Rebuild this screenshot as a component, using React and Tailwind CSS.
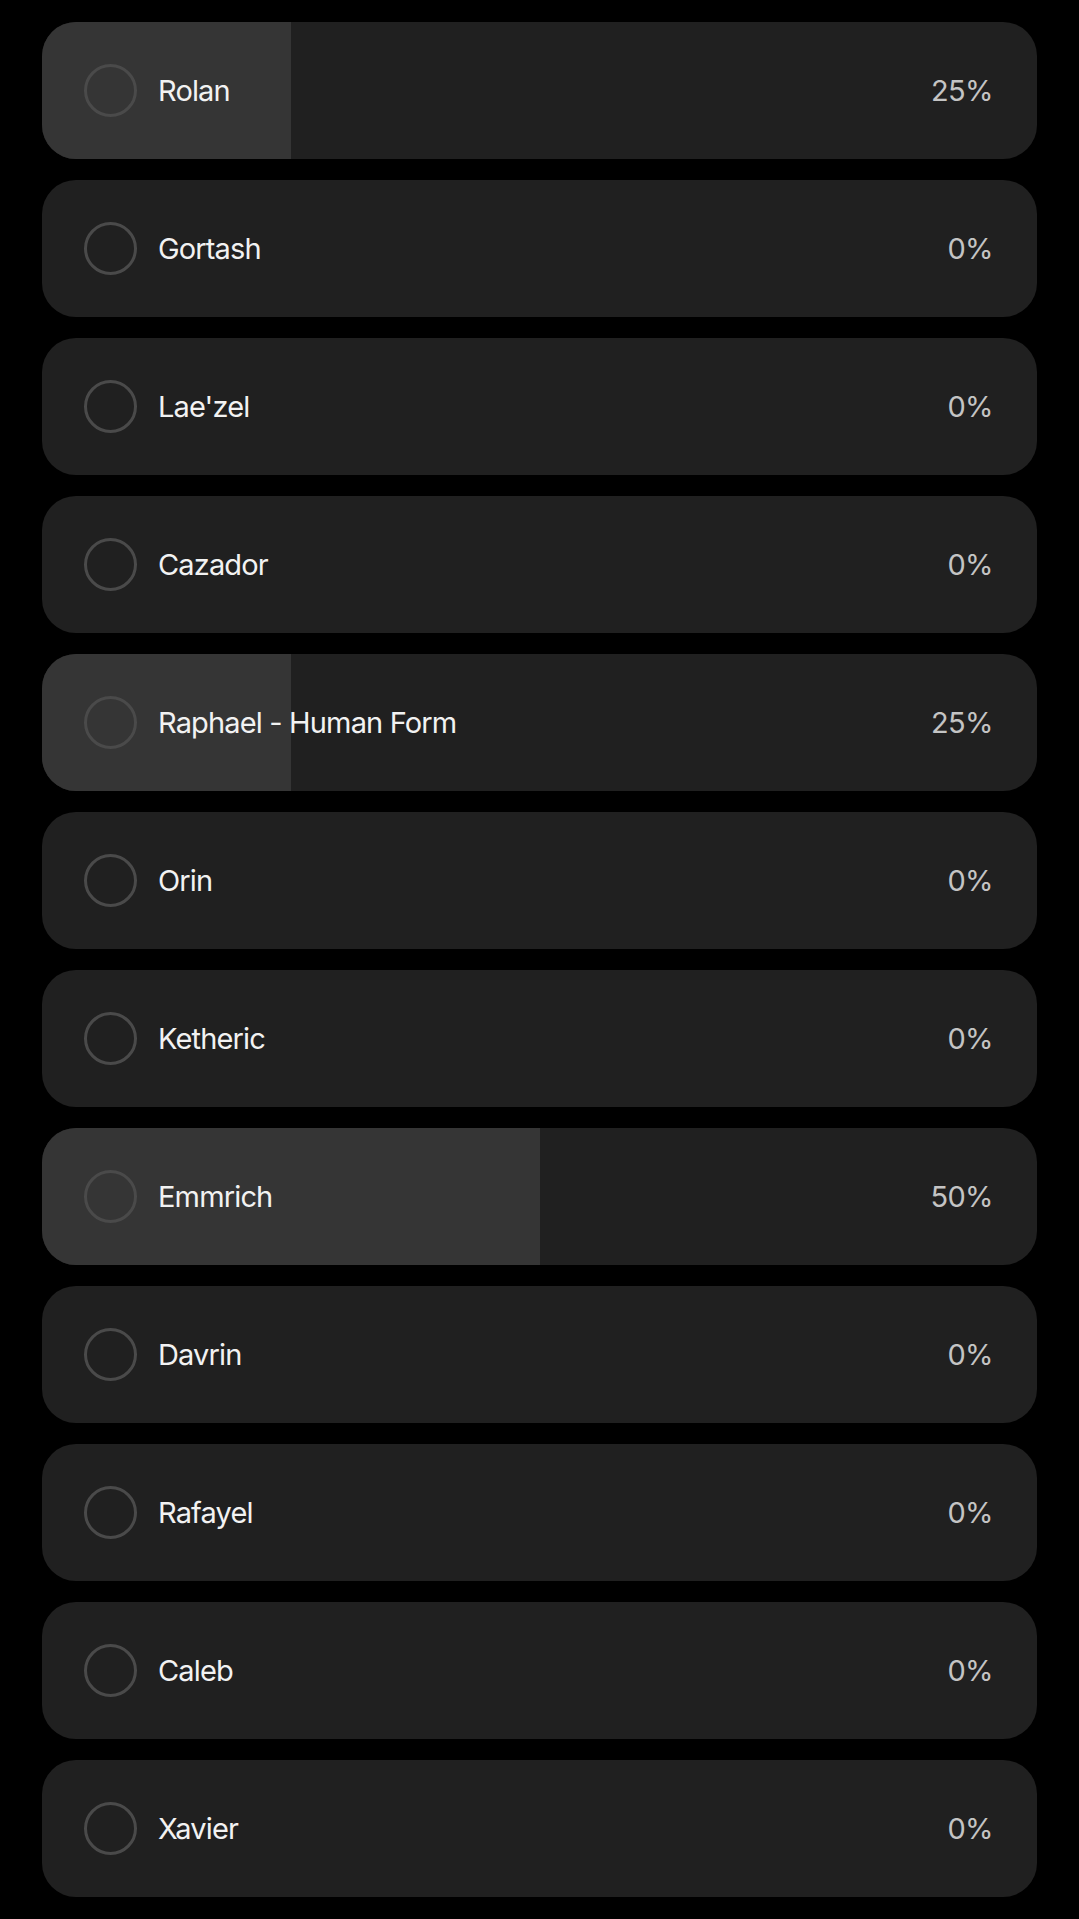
import React from 'react'

const options = [
  { name: 'Rolan', pct: 25 },
  { name: 'Gortash', pct: 0 },
  { name: "Lae'zel", pct: 0 },
  { name: 'Cazador', pct: 0 },
  { name: 'Raphael - Human Form', pct: 25 },
  { name: 'Orin', pct: 0 },
  { name: 'Ketheric', pct: 0 },
  { name: 'Emmrich', pct: 50 },
  { name: 'Davrin', pct: 0 },
  { name: 'Rafayel', pct: 0 },
  { name: 'Caleb', pct: 0 },
  { name: 'Xavier', pct: 0 },
]

const PollRow = ({ name, pct }) => (
  <div className="relative h-[137px] rounded-[34px] bg-[#202020] overflow-hidden flex items-center pl-[42px] pr-[44px]">
    <div className="absolute inset-y-0 left-0 bg-[#353535]" style={{ width: `${pct}%` }} />
    <div className="relative w-[53px] h-[53px] rounded-full border-[3px] border-[#4a4a4a] shrink-0" />
    <p className="relative ml-[21px] text-[29px] text-[#f2f2f2] tracking-[-0.85px]">{name}</p>
    <p className="relative ml-auto text-[29px] text-[#c4c4c4] tracking-[-0.6px]">{pct}%</p>
  </div>
)

const App = () => (
  <div className="min-h-[1919px] bg-black pt-[22px] px-[42px] font-['Inter',sans-serif]">
    <div className="flex flex-col gap-[21px]">
      {options.map(o => <PollRow key={o.name} name={o.name} pct={o.pct} />)}
    </div>
  </div>
)

export default App
